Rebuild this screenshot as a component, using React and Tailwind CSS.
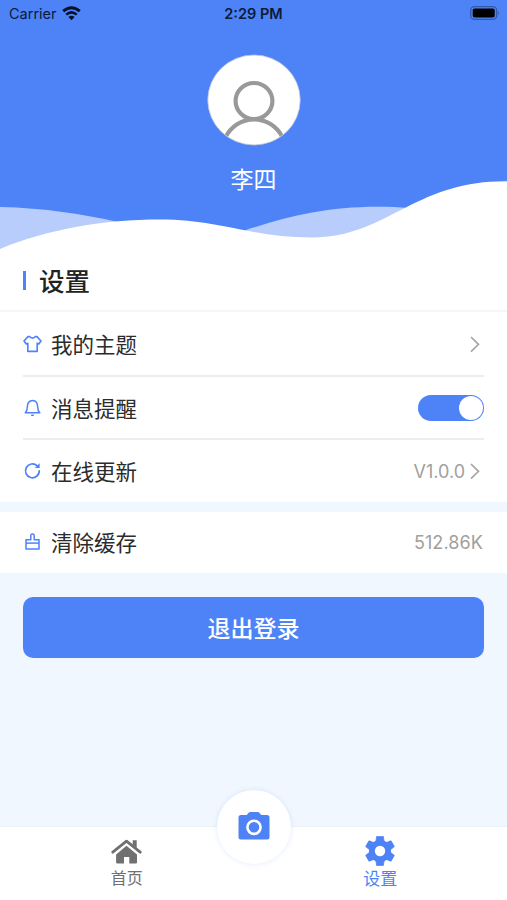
import { useState } from "react";

const ShirtIcon = () => (
  <svg className="w-[19px] h-[18px]" viewBox="0 0 19 18" fill="none" stroke="currentColor" strokeWidth={1.6} strokeLinejoin="round">
    <path d="M5 1.6 L6.6 1.6 Q7.8 3.1 9.5 3.1 Q11.2 3.1 12.4 1.6 L14 1.6 L18 6 L15.8 8.9 L14.2 8.2 V16.4 H4.8 V8.2 L3.2 8.9 L1 6 Z" />
  </svg>
);

const BellIcon = () => (
  <svg className="w-[19px] h-[18px]" viewBox="0 0 19 18" fill="none" stroke="currentColor" strokeWidth={1.5} strokeLinecap="round" strokeLinejoin="round">
    <path d="M2.2 13.8 C3.9 12.4 4.3 10.8 4.3 8.3 C4.3 4 6.2 1.4 9.5 1.4 C12.8 1.4 14.7 4 14.7 8.3 C14.7 10.8 15.1 12.4 16.8 13.8 Z" />
    <path d="M8.7 16.2 H10.3" />
  </svg>
);

const RefreshIcon = () => (
  <svg className="w-[19px] h-[18px]" viewBox="0 0 19 18" fill="none" stroke="currentColor" strokeWidth={1.7} strokeLinecap="round">
    <path d="M16.3 8.8 A6.9 6.9 0 1 1 14.2 3.9" />
    <path d="M16.6 1.2 V6 H11.8 Z" fill="currentColor" stroke="none" />
  </svg>
);

const BrushIcon = () => (
  <svg className="w-[19px] h-[18px]" viewBox="0 0 19 18" fill="none" stroke="currentColor" strokeWidth={1.5} strokeLinejoin="round">
    <path d="M3 16 V6.8 H7.8 V2.5 Q7.8 0.9 9.5 0.9 Q11.2 0.9 11.2 2.5 V6.8 H16 V16 Z" />
    <path d="M3 10.1 H16" />
  </svg>
);

const Chevron = () => (
  <svg className="w-3 h-[18px] mr-[3px]" viewBox="0 0 12 18" fill="none" stroke="#a6a6a6" strokeWidth={1.7}>
    <path d="M2 2 L9.5 9.3 L2 16.6" />
  </svg>
);

const HomeIcon = () => (
  <svg className="w-[31px] h-[26px]" viewBox="0 0 31 26" fill="currentColor">
    <path d="M15.5 6.8 L26 15.6 V23.4 Q26 24.5 24.9 24.5 H18.3 V18 H13 V24.5 H6.2 Q5.1 24.5 5.1 23.4 V15.6 Z" />
    <path d="M21.7 1.2 H25.7 V9 L21.7 5.6 Z" />
    <path d="M1.8 13.2 L15.5 2.1 L29.2 13.2" fill="none" stroke="currentColor" strokeWidth="2.8" strokeLinecap="round" strokeLinejoin="round" />
    <path d="M3 15.4 L15.5 5.2 L28 15.4" fill="none" stroke="#ffffff" strokeWidth="1.1" />
  </svg>
);

const GEAR_ANGLES = [0, 60, 120, 180, 240, 300];

const GearIcon = () => (
  <svg className="w-[30px] h-[30px]" viewBox="0 0 30 30" fill="currentColor">
    <circle cx="15" cy="15" r="11" />
    {GEAR_ANGLES.map((angle) => (
      <path
        key={angle}
        d="M11.7 0.4 H18.3 L19.2 6 H10.8 Z"
        stroke="currentColor"
        strokeWidth="0.8"
        strokeLinejoin="round"
        transform={`rotate(${angle} 15 15)`}
      />
    ))}
    <circle cx="15" cy="15" r="5.2" fill="#ffffff" />
  </svg>
);

const CameraIcon = () => (
  <svg className="w-8 h-[30px] -mt-[2px]" viewBox="0 0 32 30" fill="currentColor">
    <path d="M3 4 H8.8 L10.6 1.8 Q11.2 1 12.2 1 H19.8 Q20.8 1 21.4 1.8 L23.2 4 H29 Q31.5 4 31.5 6.5 V26 Q31.5 28.5 29 28.5 H3 Q0.5 28.5 0.5 26 V6.5 Q0.5 4 3 4 Z" />
    <circle cx="16" cy="16.3" r="6.6" fill="none" stroke="#ffffff" strokeWidth="2.6" />
  </svg>
);

function Row({ icon, label, className = "", children }) {
  return (
    <div className={`flex items-center justify-between ${className}`}>
      <div className="flex items-center">
        <span className="w-[19px] text-[#4e83f7]">{icon}</span>
        <span className="ml-[9px] pt-[2px] text-[21.5px] leading-8">{label}</span>
      </div>
      <div className="flex items-center text-[18px] text-[#a0a0a0]">{children}</div>
    </div>
  );
}

export default function App() {
  const [notify, setNotify] = useState(true);

  return (
    <div className="w-[507px] h-[900px] flex flex-col overflow-hidden bg-[#f1f7fe] text-[#2c2c2c] font-['Inter','Noto_Sans_CJK_SC',sans-serif]">
      {/* Header */}
      <header className="relative h-[250px] shrink-0 bg-[#4e83f7]">
        <svg className="absolute inset-0 w-full h-full" viewBox="0 0 507 250">
          <path d="M0 207 C45 208 82 214 118 222 L150 250 H0 Z" fill="#b9cdfc" />
          <path d="M246 230 C295 214 342 203 410 208 L400 250 H246 Z" fill="#b9cdfc" />
          <path d="M0 249 C48 229 104 219.5 160 219.5 C221 219.5 250 237.5 312 237.5 C350 237.5 375 223 405 208 C436 192 465 181 507 181.3 V250 H0 Z" fill="#ffffff" />
        </svg>
        <div className="relative flex flex-col items-center">
          <div className="w-full h-7 px-[9px] grid grid-cols-3 items-center text-[#0b1b39] text-[14.5px]">
            <div className="flex items-center gap-[5px]">
              <span>Carrier</span>
              <svg className="w-[19px] h-[15px] -mt-[2px]" viewBox="0 0 19 15" fill="none" stroke="#06102a" strokeWidth={3}>
                <path d="M1.2 5.2 Q9.5 -1.8 17.8 5.2" />
                <path d="M4.2 8.6 Q9.5 4.2 14.8 8.6" strokeWidth={2.5} />
                <path d="M6.4 11 Q9.5 8.4 12.6 11 L9.5 14.2 Z" fill="#06102a" stroke="none" />
              </svg>
            </div>
            <span className="text-center font-semibold">2:29 PM</span>
            <svg className="w-[30px] h-[14px] justify-self-end -mt-[2px] -mr-[2px]" viewBox="0 0 30 14">
              <rect x="0.7" y="0.7" width="26" height="12.6" rx="3.8" fill="none" stroke="#315aab" strokeWidth="1.3" />
              <rect x="2.7" y="2.5" width="22" height="9" rx="1.8" fill="#000000" />
              <path d="M28 5 Q30 7 28 9 Z" fill="#315aab" />
            </svg>
          </div>
          <svg className="w-[94px] h-[92px] mt-[26px]" viewBox="0 0 94 92">
            <defs>
              <clipPath id="avatar">
                <ellipse cx="47" cy="46" rx="46" ry="44.7" />
              </clipPath>
            </defs>
            <ellipse cx="47" cy="46" rx="46.2" ry="45" fill="#ffffff" stroke="#b9c3d8" strokeWidth="0.8" />
            <g clipPath="url(#avatar)" fill="none" stroke="#999999" strokeWidth="4.2">
              <ellipse cx="47" cy="47" rx="18.4" ry="18" />
              <path d="M18.5 83.5 A31.5 31.5 0 0 1 75.5 83.5" />
            </g>
          </svg>
          <div className="mt-[18px] text-[23px] leading-8 text-white">李四</div>
        </div>
      </header>

      {/* Settings list */}
      <section className="shrink-0 bg-white">
        <div className="h-[62px] flex items-center px-[23px] border-b-2 border-[#f4f6f8]">
          <div className="w-[3px] h-[19px] bg-[#4e83f7]" />
          <h1 className="ml-[13px] pt-[3px] text-[25.5px] leading-9 font-medium text-[#222222]">设置</h1>
        </div>
        <div className="px-[23px]">
          <Row icon={<ShirtIcon />} label="我的主题" className="h-[65px] border-b-2 border-[#ededee]">
            <Chevron />
          </Row>
          <Row icon={<BellIcon />} label="消息提醒" className="h-[63px] border-b-2 border-[#ededee]">
            <button
              role="switch"
              aria-checked={notify}
              onClick={() => setNotify(!notify)}
              className={`w-[66px] h-[26px] p-px rounded-full flex items-center ${notify ? "justify-end bg-[#4e83f7]" : "justify-start bg-gray-300"}`}
            >
              <span className="w-6 h-6 rounded-full bg-white" />
            </button>
          </Row>
          <Row icon={<RefreshIcon />} label="在线更新" className="h-[62px]">
            <span className="mr-1 pt-px">V1.0.0</span>
            <Chevron />
          </Row>
        </div>
      </section>
      <section className="mt-[10px] px-[23px] shrink-0 bg-white">
        <Row icon={<BrushIcon />} label="清除缓存" className="h-[61px] pb-px">
          <span className="pr-px pt-px tracking-[0.1px]">512.86K</span>
        </Row>
      </section>

      <button className="mt-6 mx-[23px] pt-[3px] h-[61px] shrink-0 rounded-[10px] bg-[#4e83f7] text-white text-[23px] font-medium">
        退出登录
      </button>

      {/* Bottom tab bar */}
      <nav className="relative mt-auto h-[74px] shrink-0 grid grid-cols-2 bg-white border-t border-[#edf1f8]">
        <div className="flex flex-col items-center pt-3 text-[#707070]">
          <HomeIcon />
          <span className="mt-px text-[16px] leading-6">首页</span>
        </div>
        <div className="flex flex-col items-center pt-[9px] text-[#4e83f7]">
          <GearIcon />
          <span className="mt-px text-[17px] leading-6">设置</span>
        </div>
        <button className="absolute left-1/2 -top-[37px] -translate-x-1/2 w-[74px] h-[74px] rounded-full bg-white shadow-[0_0_5px_rgba(78,131,247,0.18)] flex items-center justify-center text-[#4e83f7]">
          <CameraIcon />
        </button>
      </nav>
    </div>
  );
}
